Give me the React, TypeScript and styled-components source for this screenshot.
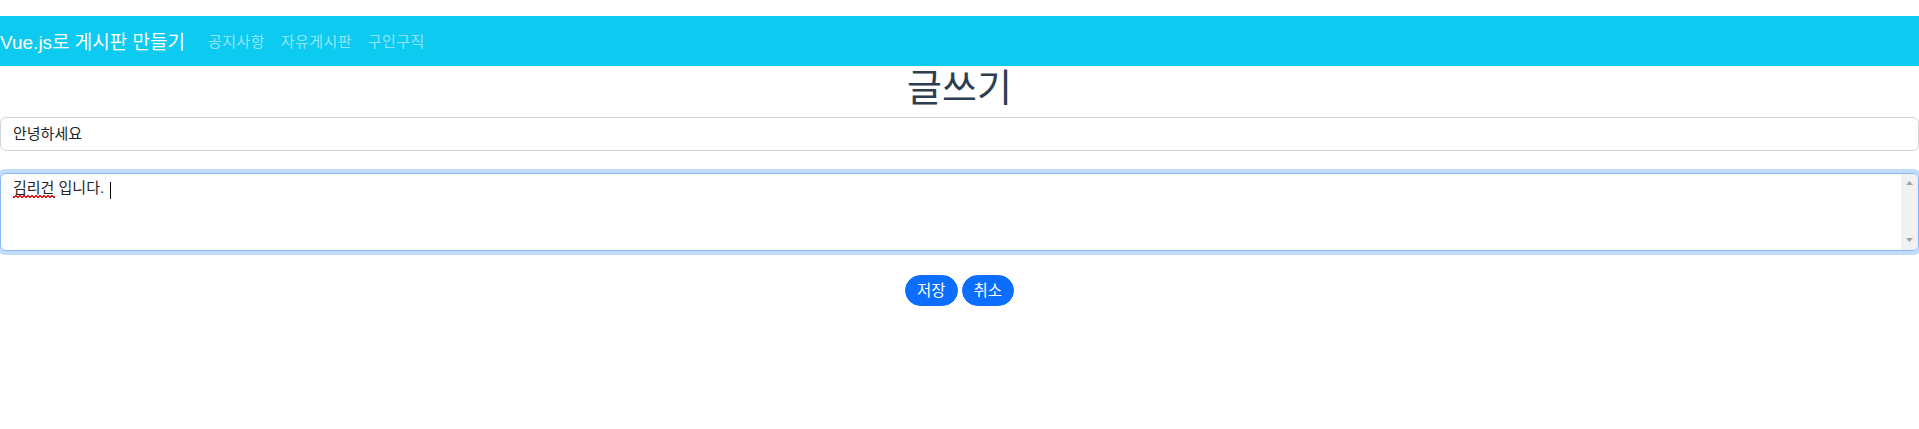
import React from "react";
import styled, { createGlobalStyle } from "styled-components";

const Global = createGlobalStyle`
  html, body { margin: 0; padding: 0; background: #fff; }
  body {
    font-family: "Liberation Sans", "Noto Sans CJK KR", sans-serif;
    color: #212529;
  }
  * { box-sizing: border-box; }
`;

const Page = styled.div`
  padding-top: 16px;
  display: flex;
  flex-direction: column;
`;

const Navbar = styled.nav`
  height: 50px;
  padding-bottom: 2px;
  background: #0dcaf0;
  display: flex;
  align-items: center;
`;

const Brand = styled.a`
  color: #fff;
  font-size: 19px;
  margin-right: 15px;
  text-decoration: none;
  white-space: nowrap;
`;

const NavList = styled.div`
  display: flex;
  align-items: center;
`;

const NavLink = styled.a`
  color: rgba(255, 255, 255, 0.55);
  font-size: 15px;
  letter-spacing: 0.4px;
  padding: 8px 8px;
  text-decoration: none;
`;

const Title = styled.h1`
  margin: 0 0 7px;
  text-align: center;
  font-size: 38px;
  font-weight: 400;
  line-height: 44px;
  color: #2c3e50;
`;

const Form = styled.div`
  display: flex;
  flex-direction: column;
`;

const TextInput = styled.input`
  width: 100%;
  height: 34px;
  padding: 0 12px 3px;
  font: inherit;
  font-size: 15px;
  color: #212529;
  border: 1px solid #ced4da;
  border-radius: 6px;
  outline: none;
  background: #fff;
`;

const AreaWrap = styled.div`
  position: relative;
  margin-top: 22px;
`;

const TextArea = styled.textarea<{ $focused?: boolean }>`
  display: block;
  width: 100%;
  height: 78px;
  padding: 4px 30px 4px 12px;
  font: inherit;
  font-size: 15px;
  line-height: 20px;
  color: #212529;
  border: 1px solid ${(p) => (p.$focused ? "#86b7fe" : "#ced4da")};
  border-radius: 6px;
  outline: none;
  resize: none;
  overflow: hidden;
  background: #fff;
  box-shadow: ${(p) => (p.$focused ? "0 0 0 4px rgba(13,110,253,.25)" : "none")};
`;

const ScrollTrack = styled.div`
  position: absolute;
  top: 1px;
  right: 1px;
  bottom: 1px;
  width: 17px;
  background: #f1f1f1;
  border-radius: 0 5px 5px 0;
  display: flex;
  flex-direction: column;
  justify-content: space-between;
  align-items: center;
  padding: 7px 0 8px;
  pointer-events: none;
`;

const Arrow = styled.svg`
  display: block;
  width: 7px;
  height: 4px;
`;

const Squiggle = styled.span`
  position: absolute;
  left: 13px;
  top: 22px;
  width: 42px;
  height: 3px;
  background-image: linear-gradient(135deg, transparent 40%, #e02020 40%, #e02020 60%, transparent 60%),
    linear-gradient(45deg, transparent 40%, #e02020 40%, #e02020 60%, transparent 60%);
  background-size: 4px 3px;
  background-position: 0 0, 2px 0;
  pointer-events: none;
`;

const Caret = styled.span`
  position: absolute;
  left: 110px;
  top: 9px;
  width: 1px;
  height: 17px;
  background: #000;
  pointer-events: none;
`;

const Actions = styled.div`
  display: flex;
  justify-content: center;
  gap: 4px;
  margin-top: 24px;
`;

const PillButton = styled.button`
  height: 31px;
  padding: 0 11px 3px;
  font: inherit;
  font-size: 15.5px;
  color: #fff;
  background: #0d6efd;
  border: 1px solid #0d6efd;
  border-radius: 50rem;
  cursor: pointer;
`;

export default function App() {
  return (
    <Page>
      <Global />
      <Navbar>
        <Brand href="#">Vue.js로 게시판 만들기</Brand>
        <NavList>
          <NavLink href="#">공지사항</NavLink>
          <NavLink href="#">자유게시판</NavLink>
          <NavLink href="#">구인구직</NavLink>
        </NavList>
      </Navbar>
      <Title>글쓰기</Title>
      <Form>
        <TextInput defaultValue="안녕하세요" />
        <AreaWrap>
          <TextArea $focused rows={3} defaultValue="김리건 입니다." spellCheck={false} />
          <ScrollTrack>
            <Arrow viewBox="0 0 7 4">
              <polygon points="3.5,0 7,4 0,4" fill="#a3a3a3" />
            </Arrow>
            <Arrow viewBox="0 0 7 4">
              <polygon points="0,0 7,0 3.5,4" fill="#a3a3a3" />
            </Arrow>
          </ScrollTrack>
          <Squiggle />
          <Caret />
        </AreaWrap>
        <Actions>
          <PillButton>저장</PillButton>
          <PillButton>취소</PillButton>
        </Actions>
      </Form>
    </Page>
  );
}
